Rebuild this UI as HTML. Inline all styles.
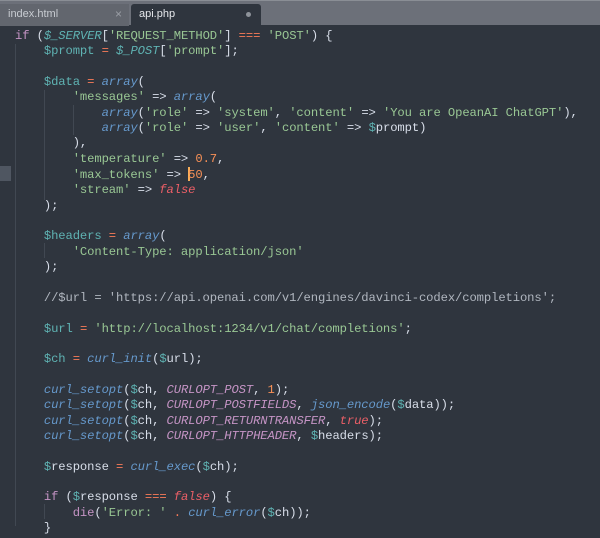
<!DOCTYPE html>
<html><head><meta charset="utf-8"><style>
html,body{margin:0;padding:0;width:600px;height:538px;overflow:hidden;background:#2f353e;}
.tabs{position:absolute;left:0;top:0;width:600px;height:25px;background:#6c7079;border-top:1px solid #8a8e95;box-sizing:border-box;}
.tab1{position:absolute;left:0;top:3px;width:129px;height:22px;background:#62666e;font:11px "Liberation Sans",sans-serif;color:#c8ccd2;}
.tab1 span{position:absolute;left:8px;top:4px}
.tab1 b{position:absolute;left:115px;top:3px;font-weight:normal;color:#9a9ea5;font-size:12px}
.tab2{position:absolute;left:131px;top:3px;width:130px;height:22px;background:#2f353e;border-radius:3px 3px 0 0;font:11px "Liberation Sans",sans-serif;color:#e6e8eb;}
.tab2 span{position:absolute;left:8px;top:4px}
.tab2 i{position:absolute;left:115px;top:8px;width:5px;height:5px;border-radius:50%;background:#8e939a}
.gut{position:absolute;left:0;top:166px;width:11px;height:15px;background:#4f5661}
pre{position:absolute;left:15px;top:29px;margin:0;font:12.2px/15.34px "Liberation Mono",monospace;letter-spacing:-0.1px;color:#d8dee9;}
.k{color:#c594c5}.v{color:#5fb3b3}.s{color:#99c794}.o{color:#f97b58}.f{color:#6699cc;font-style:italic}.n{color:#f99157}.b{color:#ec5f67;font-style:italic}.c{color:#c594c5;font-style:italic}.cm{color:#b0b6bf}.sv{color:#5fb3b3;font-style:italic}
.g{position:absolute;width:1px;background:#414852}
.cur{display:inline-block;width:0;height:14px;border-left:2px solid #f9ae58;vertical-align:-3px;margin-right:-2px}
</style></head><body>
<div class="tabs"><div class="tab1"><span>index.html</span><b>×</b></div><div class="tab2"><span>api.php</span><i></i></div></div>
<div class="gut"></div>
<div class="g" style="left:15px;top:44px;height:482px"></div>
<div class="g" style="left:44px;top:90px;height:110px"></div>
<div class="g" style="left:44px;top:243px;height:15px"></div>
<div class="g" style="left:44px;top:504px;height:15px"></div>
<div class="g" style="left:73px;top:105px;height:30px"></div>
<pre><span class="k">if</span> (<span class="sv">$_SERVER</span>[<span class="s">'REQUEST_METHOD'</span>] <span class="o">===</span> <span class="s">'POST'</span>) {
    <span class="v">$prompt</span> <span class="o">=</span> <span class="sv">$_POST</span>[<span class="s">'prompt'</span>];

    <span class="v">$data</span> <span class="o">=</span> <span class="f">array</span>(
        <span class="s">'messages'</span> =&gt; <span class="f">array</span>(
            <span class="f">array</span>(<span class="s">'role'</span> =&gt; <span class="s">'system'</span>, <span class="s">'content'</span> =&gt; <span class="s">'You are OpeanAI ChatGPT'</span>),
            <span class="f">array</span>(<span class="s">'role'</span> =&gt; <span class="s">'user'</span>, <span class="s">'content'</span> =&gt; <span class="v">$</span>prompt)
        ),
        <span class="s">'temperature'</span> =&gt; <span class="n">0.7</span>,
        <span class="s">'max_tokens'</span> =&gt; <span class="cur"></span><span class="n">50</span>,
        <span class="s">'stream'</span> =&gt; <span class="b">false</span>
    );

    <span class="v">$headers</span> <span class="o">=</span> <span class="f">array</span>(
        <span class="s">'Content-Type: application/json'</span>
    );

    <span class="cm">//$url = 'https://api.openai.com/v1/engines/davinci-codex/completions';</span>

    <span class="v">$url</span> <span class="o">=</span> <span class="s">'http://localhost:1234/v1/chat/completions'</span>;

    <span class="v">$ch</span> <span class="o">=</span> <span class="f">curl_init</span>(<span class="v">$</span>url);

    <span class="f">curl_setopt</span>(<span class="v">$</span>ch, <span class="c">CURLOPT_POST</span>, <span class="n">1</span>);
    <span class="f">curl_setopt</span>(<span class="v">$</span>ch, <span class="c">CURLOPT_POSTFIELDS</span>, <span class="f">json_encode</span>(<span class="v">$</span>data));
    <span class="f">curl_setopt</span>(<span class="v">$</span>ch, <span class="c">CURLOPT_RETURNTRANSFER</span>, <span class="b">true</span>);
    <span class="f">curl_setopt</span>(<span class="v">$</span>ch, <span class="c">CURLOPT_HTTPHEADER</span>, <span class="v">$</span>headers);

    <span class="v">$</span>response <span class="o">=</span> <span class="f">curl_exec</span>(<span class="v">$</span>ch);

    <span class="k">if</span> (<span class="v">$</span>response <span class="o">===</span> <span class="b">false</span>) {
        <span class="k">die</span>(<span class="s">'Error: '</span> <span class="o">.</span> <span class="f">curl_error</span>(<span class="v">$</span>ch));
    }</pre>
</body></html>
